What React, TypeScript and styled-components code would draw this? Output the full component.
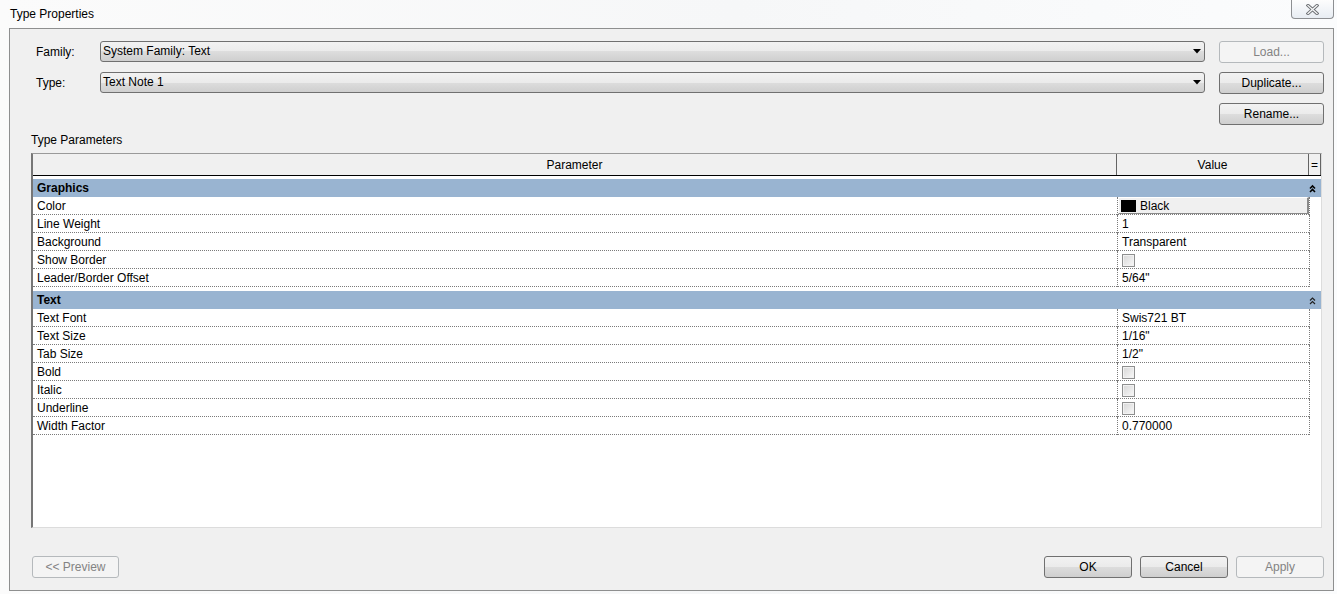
import * as React from 'react';
import styled, { createGlobalStyle } from 'styled-components';

const GlobalStyle = createGlobalStyle`
    html, body {
        margin: 0;
        padding: 0;
    }
    body {
        font-family: 'Liberation Sans', Arial, sans-serif;
        font-size: 12px;
        color: #000;
        background: #fff;
    }
`;

const Window = styled.div`
    width: 1337px;
    height: 594px;
    display: flex;
    flex-direction: column;
    overflow: hidden;
    background: linear-gradient(90deg, #fbfbfb 0%, #f6f7f8 55%, #fbfcfd 100%);
`;

const TitleBar = styled.div`
    height: 28px;
    flex: none;
    display: flex;
    justify-content: space-between;
    align-items: flex-start;
    padding-left: 10px;
    box-sizing: border-box;
`;

const Title = styled.div`
    line-height: 28px;
    color: #000;
`;

const CloseButton = styled.div`
    width: 43px;
    height: 19px;
    margin-right: 3px;
    box-sizing: border-box;
    border: 1px solid #8d8f92;
    border-top: none;
    border-radius: 0 0 4px 4px;
    background: linear-gradient(#fdfdfd, #e8edf3);
    display: flex;
    align-items: center;
    justify-content: center;
`;

const Panel = styled.div`
    flex: 1;
    min-height: 0;
    margin: 0 3px 3px 9px;
    border: 1px solid #8e8f8f;
    background: #f0f0f0;
    display: flex;
    flex-direction: column;
    padding: 12px 9px 0 21px;
    box-sizing: border-box;
`;

const Form = styled.div`
    display: grid;
    grid-template-columns: 50px 1fr 105px;
    grid-auto-rows: 21px;
    row-gap: 10px;
    column-gap: 14px;
    padding-left: 5px;
`;

const FieldLabel = styled.div`
    align-self: center;
    white-space: nowrap;
`;

const Combo = styled.div`
    border: 1px solid #707070;
    border-radius: 3px;
    background: linear-gradient(#f2f2f2 0%, #ebebeb 50%, #dddddd 50%, #cfcfcf 100%);
    display: flex;
    align-items: center;
    justify-content: space-between;
    padding: 0 3px 1px 2px;
    box-sizing: border-box;
`;

const Button = styled.div<{ $disabled?: boolean; $width?: number }>`
    width: ${p => (p.$width ? `${p.$width}px` : 'auto')};
    height: 22px;
    box-sizing: border-box;
    border: 1px solid ${p => (p.$disabled ? '#b5b9bc' : '#707070')};
    border-radius: 3px;
    background: ${p =>
        p.$disabled ? '#f4f4f4' : 'linear-gradient(#f2f2f2 0%, #ebebeb 50%, #dddddd 50%, #cfcfcf 100%)'};
    color: ${p => (p.$disabled ? '#838383' : '#000')};
    display: flex;
    align-items: center;
    justify-content: center;
    white-space: nowrap;
`;

const FormButtonCell = styled.div<{ $col?: number }>`
    grid-column: ${p => p.$col || 'auto'};
    display: flex;
`;

const SectionLabel = styled.div`
    margin-top: 9px;
    line-height: 14px;
`;

const Table = styled.div`
    flex: 1;
    min-height: 0;
    margin: 6px 2px 0 0;
    border-left: 2px solid #767676;
    border-top: 1px solid #9a9a9a;
    border-right: 1px solid #dcdcdc;
    border-bottom: 1px solid #dcdcdc;
    background: #fff;
    display: flex;
    flex-direction: column;
`;

const HeaderRow = styled.div`
    display: grid;
    grid-template-columns: 1fr 192px 12px;
    height: 22px;
    box-sizing: border-box;
    border-bottom: 1px solid #000;
    background: #f0f0f0;
`;

const HeaderCell = styled.div`
    border-right: 1px solid #646464;
    display: flex;
    align-items: center;
    justify-content: center;
`;

const Body = styled.div`
    flex: 1;
    padding-top: 3px;
`;

const GroupBlock = styled.div`
    & + & {
        margin-top: 4px;
    }
`;

const GroupRow = styled.div`
    display: grid;
    grid-template-columns: 1fr 12px;
    height: 18px;
    background: #99b4d1;
    font-weight: bold;
    align-items: center;
    padding-left: 4px;
`;

const ChevronCell = styled.div`
    display: flex;
    align-items: center;
    justify-content: flex-start;
`;

const Row = styled.div`
    display: grid;
    grid-template-columns: 1fr 192px 12px;
    height: 18px;
`;

const ParamCell = styled.div`
    box-sizing: border-box;
    padding: 2px 0 0 4px;
    border-bottom: 1px dotted #7a7a7a;
    line-height: 15px;
    white-space: nowrap;
`;

const ValueCell = styled.div<{ $kind?: 'text' | 'color' | 'check' }>`
    box-sizing: border-box;
    padding: ${p => (p.$kind === 'color' ? '0' : p.$kind === 'check' ? '1px 0 0 4px' : '2px 0 0 4px')};
    border-left: 1px dotted #7a7a7a;
    border-bottom: 1px dotted #7a7a7a;
    line-height: 15px;
    display: flex;
    align-items: ${p => (p.$kind === 'text' ? 'flex-start' : 'center')};
    white-space: nowrap;
`;

const FillerCell = styled.div`
    border-left: 1px dotted #7a7a7a;
`;

const ColorButton = styled.div`
    flex: 1;
    height: 17px;
    box-sizing: border-box;
    background: #f0f0f0;
    border: 1px solid;
    border-color: #ffffff #8a8a8a #8a8a8a #ffffff;
    border-right-width: 2px;
    display: flex;
    align-items: center;
    gap: 4px;
    padding: 1px 0 0 2px;
`;

const Swatch = styled.div`
    width: 15px;
    height: 12px;
    background: #000;
`;

const Checkbox = styled.div`
    width: 13px;
    height: 13px;
    box-sizing: border-box;
    border: 1px solid #8e8f8f;
    background: linear-gradient(135deg, #d6d6d6, #f9f9f9);
    box-shadow: inset 0 0 0 1px #f2f2f2;
`;

const Footer = styled.div`
    flex: none;
    display: flex;
    justify-content: space-between;
    padding: 28px 0 12px 1px;
`;

const ButtonGroup = styled.div`
    display: flex;
    gap: 8px;
`;

type Value = string | { kind: 'color'; name: string } | { kind: 'check' };

interface IParam {
    name: string;
    value: Value;
}

interface IGroup {
    name: string;
    params: IParam[];
}

const groups: IGroup[] = [
    {
        name: 'Graphics',
        params: [
            { name: 'Color', value: { kind: 'color', name: 'Black' } },
            { name: 'Line Weight', value: '1' },
            { name: 'Background', value: 'Transparent' },
            { name: 'Show Border', value: { kind: 'check' } },
            { name: 'Leader/Border Offset', value: '5/64"' },
        ],
    },
    {
        name: 'Text',
        params: [
            { name: 'Text Font', value: 'Swis721 BT' },
            { name: 'Text Size', value: '1/16"' },
            { name: 'Tab Size', value: '1/2"' },
            { name: 'Bold', value: { kind: 'check' } },
            { name: 'Italic', value: { kind: 'check' } },
            { name: 'Underline', value: { kind: 'check' } },
            { name: 'Width Factor', value: '0.770000' },
        ],
    },
];

const DropArrow = () => (
    <svg width="8" height="5" viewBox="0 0 8 5">
        <polygon points="0,0 8,0 4,4.5" fill="#000" />
    </svg>
);

const Chevrons = ({ light }: { light?: boolean }) => (
    <svg width="7" height="9" viewBox="0 0 7 9">
        <path
            d="M1 4.5 L3.5 2 L6 4.5 M1 8 L3.5 5.5 L6 8"
            fill="none"
            stroke={light ? '#222' : '#000'}
            strokeWidth={light ? 1.2 : 1.6}
        />
    </svg>
);

const CloseGlyph = () => (
    <svg width="13" height="11" viewBox="0 0 13 11">
        <path d="M2 1.5 L11 9.5 M11 1.5 L2 9.5" stroke="#6b6e72" strokeWidth="3.2" strokeLinecap="square" />
        <path d="M2 1.5 L11 9.5 M11 1.5 L2 9.5" stroke="#f6f7f8" strokeWidth="1.3" strokeLinecap="square" />
    </svg>
);

const renderValue = (value: Value) => {
    if (typeof value === 'string') {
        return <ValueCell $kind="text">{value}</ValueCell>;
    }
    if (value.kind === 'color') {
        return (
            <ValueCell $kind="color">
                <ColorButton>
                    <Swatch />
                    {value.name}
                </ColorButton>
            </ValueCell>
        );
    }
    return (
        <ValueCell $kind="check">
            <Checkbox />
        </ValueCell>
    );
};

const App = () => {
    return (
        <Window>
            <GlobalStyle />
            <TitleBar>
                <Title>Type Properties</Title>
                <CloseButton>
                    <CloseGlyph />
                </CloseButton>
            </TitleBar>
            <Panel>
                <Form>
                    <FieldLabel>Family:</FieldLabel>
                    <Combo>
                        System Family: Text
                        <DropArrow />
                    </Combo>
                    <Button $disabled>Load...</Button>

                    <FieldLabel>Type:</FieldLabel>
                    <Combo>
                        Text Note 1
                        <DropArrow />
                    </Combo>
                    <Button>Duplicate...</Button>

                    <FormButtonCell $col={3}>
                        <Button $width={105}>Rename...</Button>
                    </FormButtonCell>
                </Form>

                <SectionLabel>Type Parameters</SectionLabel>

                <Table>
                    <HeaderRow>
                        <HeaderCell>Parameter</HeaderCell>
                        <HeaderCell>Value</HeaderCell>
                        <HeaderCell>=</HeaderCell>
                    </HeaderRow>
                    <Body>
                        {groups.map((group, gi) => (
                            <GroupBlock key={group.name}>
                                <GroupRow>
                                    {group.name}
                                    <ChevronCell>
                                        <Chevrons light={gi > 0} />
                                    </ChevronCell>
                                </GroupRow>
                                {group.params.map(param => (
                                    <Row key={param.name}>
                                        <ParamCell>{param.name}</ParamCell>
                                        {renderValue(param.value)}
                                        <FillerCell />
                                    </Row>
                                ))}
                            </GroupBlock>
                        ))}
                    </Body>
                </Table>

                <Footer>
                    <Button $disabled $width={87}>
                        &lt;&lt; Preview
                    </Button>
                    <ButtonGroup>
                        <Button $width={88}>OK</Button>
                        <Button $width={88}>Cancel</Button>
                        <Button $width={88} $disabled>
                            Apply
                        </Button>
                    </ButtonGroup>
                </Footer>
            </Panel>
        </Window>
    );
};

export default App;
